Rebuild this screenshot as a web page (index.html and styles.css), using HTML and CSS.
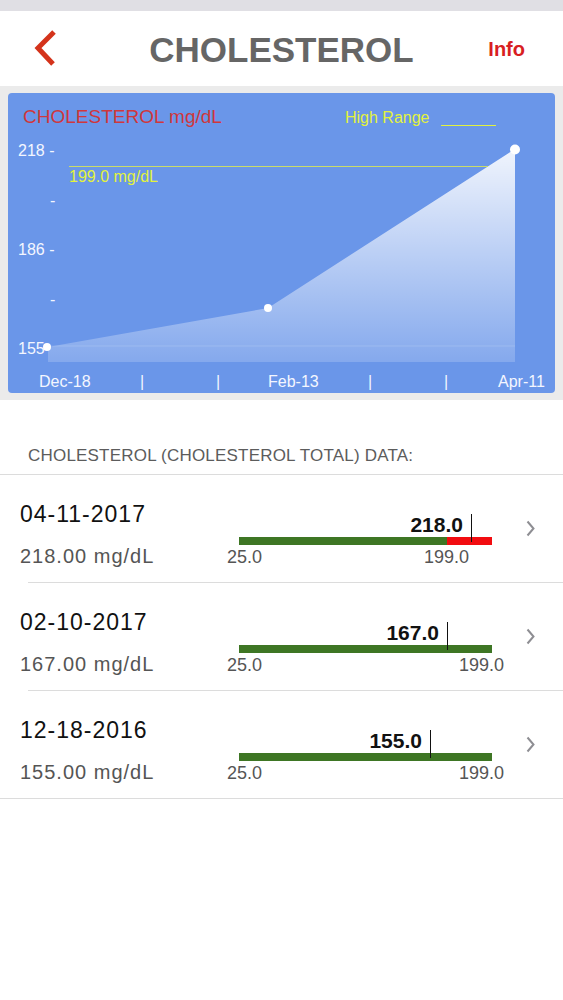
FILE: index.html
```html
<!DOCTYPE html>
<html lang="en">
<head>
<meta charset="UTF-8">
<meta name="viewport" content="width=device-width, initial-scale=1.0">
<title>Cholesterol</title>
<link rel="stylesheet" href="styles.css">
</head>
<body>
	<div class="status"></div>

	<div class="nav">
		<a class="back" href="#">
			<svg width="24" height="40" viewBox="0 0 24 40"><polyline points="20,6 4,22 19,38" fill="none" stroke="#d4331b" stroke-width="5"/></svg>
		</a>
		<div class="title">CHOLESTEROL</div>
		<a class="info" href="#">Info</a>
	</div>

	<div class="chart-box">
		<div class="panel">
			<svg class="chart" width="547" height="300" viewBox="0 0 547 300">
				<defs>
					<linearGradient id="fillGrad" x1="0" y1="56" x2="0" y2="269" gradientUnits="userSpaceOnUse">
						<stop offset="0" stop-color="#fff" stop-opacity="0.9"/>
						<stop offset="1" stop-color="#fff" stop-opacity="0.18"/>
					</linearGradient>
				</defs>
				<!-- area -->
				<polygon points="40,254 260,215 507,56 507,269 40,269" fill="url(#fillGrad)"/>
				<line x1="40" y1="253" x2="507" y2="253" stroke="#fff" stroke-opacity="0.15"/>
				<!-- high range -->
				<line x1="61" y1="73.5" x2="480" y2="73.5" stroke="#c9dc6a" stroke-width="1"/>
				<text class="hi" x="61" y="89">199.0 mg/dL</text>
				<!-- labels -->
				<text class="name" x="15" y="30">CHOLESTEROL mg/dL</text>
				<text class="hi" x="337" y="30">High Range</text>
				<line x1="433" y1="32.5" x2="488" y2="32.5" stroke="#e3f23c" stroke-width="1"/>
				<!-- y axis -->
				<text class="axis" x="10" y="63">218 -</text>
				<text class="axis" x="42" y="113">-</text>
				<text class="axis" x="10" y="162">186 -</text>
				<text class="axis" x="42" y="212">-</text>
				<text class="axis" x="10" y="261">155</text>
				<!-- points -->
				<circle cx="39" cy="254" r="4" fill="#fff"/>
				<circle cx="260" cy="215" r="4" fill="#fff"/>
				<circle cx="507" cy="56.5" r="5" fill="#fff"/>
				<!-- x axis -->
				<text class="axis" x="31" y="294">Dec-18</text>
				<text class="axis" x="134" y="294" text-anchor="middle">|</text>
				<text class="axis" x="210" y="294" text-anchor="middle">|</text>
				<text class="axis" x="260" y="294">Feb-13</text>
				<text class="axis" x="362" y="294" text-anchor="middle">|</text>
				<text class="axis" x="438" y="294" text-anchor="middle">|</text>
				<text class="axis" x="490" y="294">Apr-11</text>
			</svg>
		</div>
	</div>

	<div class="list-head">CHOLESTEROL (CHOLESTEROL TOTAL) DATA:</div>

	<ul class="rows">
		<li class="row">
			<div class="info-col">
				<div class="date">04-11-2017</div>
				<div class="amount">218.00 mg/dL</div>
			</div>
			<div class="gauge">
				<div class="bar"><div class="high" style="width: 45px"></div></div>
				<div class="mark" style="left: 244px"><span class="val">218.0</span></div>
				<span class="tick" style="left: 0">25.0</span>
				<span class="tick" style="left: 197px">199.0</span>
			</div>
			<svg class="chev" width="9" height="17" viewBox="0 0 9 17"><polyline points="1.5,1.5 7.5,8.5 1.5,15.5" fill="none" stroke="#8e8e93" stroke-width="2"/></svg>
		</li>
		<li class="row">
			<div class="info-col">
				<div class="date">02-10-2017</div>
				<div class="amount">167.00 mg/dL</div>
			</div>
			<div class="gauge">
				<div class="bar"></div>
				<div class="mark" style="left: 220px"><span class="val">167.0</span></div>
				<span class="tick" style="left: 0">25.0</span>
				<span class="tick" style="left: 232px">199.0</span>
			</div>
			<svg class="chev" width="9" height="17" viewBox="0 0 9 17"><polyline points="1.5,1.5 7.5,8.5 1.5,15.5" fill="none" stroke="#8e8e93" stroke-width="2"/></svg>
		</li>
		<li class="row">
			<div class="info-col">
				<div class="date">12-18-2016</div>
				<div class="amount">155.00 mg/dL</div>
			</div>
			<div class="gauge">
				<div class="bar"></div>
				<div class="mark" style="left: 203px"><span class="val">155.0</span></div>
				<span class="tick" style="left: 0">25.0</span>
				<span class="tick" style="left: 232px">199.0</span>
			</div>
			<svg class="chev" width="9" height="17" viewBox="0 0 9 17"><polyline points="1.5,1.5 7.5,8.5 1.5,15.5" fill="none" stroke="#8e8e93" stroke-width="2"/></svg>
		</li>
	</ul>
</body>
</html>
```

FILE: styles.css
```css
body {
	margin: 0;
	background: #fff;
	font-family: "Liberation Sans", Arial, sans-serif;
}
.status {
	height: 11px;
	background: #e0dfe4;
}
/* header */
.nav {
	height: 75px;
	display: grid;
	grid-template-columns: 1fr auto 1fr;
	align-items: start;
}
.back {
	justify-self: start;
	margin: 15px 0 0 34px;
	display: block;
	line-height: 0;
}
.title {
	margin-top: 19px;
	font-size: 35px;
	line-height: 40px;
	font-weight: bold;
	color: #666;
}
.info {
	justify-self: end;
	margin: 26px 38px 0 0;
	font-size: 20px;
	line-height: 24px;
	font-weight: bold;
	color: #d81e22;
	text-decoration: none;
}
/* chart */
.chart-box {
	background: #ebebeb;
	padding: 7px 8px;
}
.panel {
	height: 300px;
	background: #6a96e9;
	border-radius: 4px;
	overflow: hidden;
}
.chart {
	display: block;
	font-family: "Liberation Sans", Arial, sans-serif;
}
.chart .name {
	font-size: 19px;
	fill: #d0373c;
}
.chart .hi {
	font-size: 16px;
	fill: #e3f23c;
}
.chart .axis {
	font-size: 16px;
	fill: #f4f6ff;
}
/* list */
.list-head {
	height: 75px;
	box-sizing: border-box;
	padding: 46px 0 0 28px;
	border-bottom: 1px solid #dcdcdc;
	font-size: 17px;
	line-height: 20px;
	letter-spacing: 0.2px;
	color: #5c5c5c;
}
.rows {
	list-style: none;
	margin: 0;
	padding: 0;
}
.row {
	position: relative;
	display: flex;
	height: 108px;
	box-sizing: border-box;
	padding-left: 20px;
}
.row::after {
	content: '';
	position: absolute;
	left: 28px;
	right: 0;
	bottom: 0;
	height: 1px;
	background: #dcdcdc;
}
.row:last-child::after {
	left: 0;
}
.info-col {
	width: 207px;
	padding-top: 25px;
}
.date {
	font-size: 23px;
	line-height: 28px;
	letter-spacing: 1px;
	color: #111;
}
.amount {
	margin-top: 16px;
	font-size: 20px;
	line-height: 24px;
	letter-spacing: 1px;
	color: #555;
}
.gauge {
	position: relative;
	width: 278px;
	padding-top: 62px;
}
.bar {
	margin-left: 12px;
	width: 253px;
	height: 8px;
	background: #3e7624;
	display: flex;
	justify-content: flex-end;
}
.bar .high {
	height: 100%;
	background: #f20c10;
}
.mark {
	position: absolute;
	top: 39px;
	width: 1px;
	height: 28px;
	background: #111;
}
.mark .val {
	position: absolute;
	right: 9px;
	top: -1px;
	font-size: 21px;
	line-height: 24px;
	font-weight: bold;
	color: #111;
}
.tick {
	position: absolute;
	top: 72px;
	font-size: 18px;
	line-height: 21px;
	color: #555;
}
.chev {
	margin: 45px 0 0 21px;
	flex: none;
}
```
